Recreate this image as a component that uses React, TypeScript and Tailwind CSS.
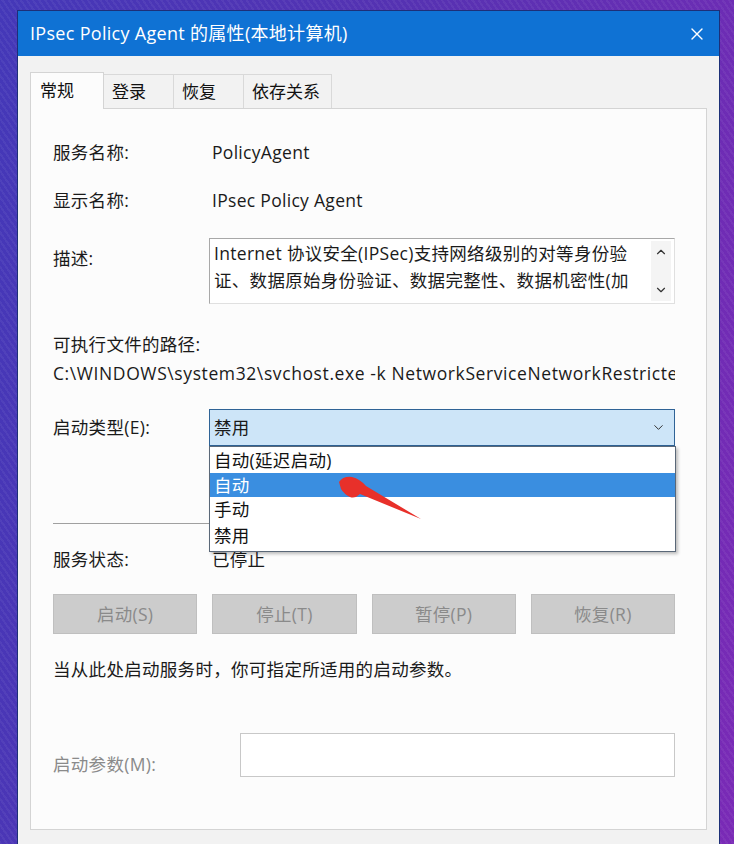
import { X, ChevronDown, ChevronUp } from "lucide-react"

const font = "font-['Open_Sans','Noto_Sans_CJK_SC',sans-serif]"

export default function App() {
  return (
    <div
      className={`relative w-[734px] h-[844px] overflow-hidden ${font} bg-[repeating-linear-gradient(55deg,rgba(255,255,255,0.05)_0_2px,transparent_2px_5px),linear-gradient(100deg,#4438b8_0%,#5532b2_45%,#6a2db4_80%,#7a2ab6_100%)] pl-[17px] pt-[10px]`}
    >
      <div className="w-[703px] h-[860px] border border-[#1d2f78] bg-[#f2f2f2] flex flex-col">
        {/* title bar */}
        <div className="h-[45px] bg-[#0f72d4] flex items-center pl-[12px] pr-[12px] text-white">
          <span className="text-[18px] tracking-[0.3px]">IPsec Policy Agent 的属性(本地计算机)</span>
          <X className="ml-auto w-[20px] h-[20px]" strokeWidth={1.6} />
        </div>

        <div className="px-[12px] pt-[15px] flex flex-col">
          {/* tabs */}
          <div className="flex items-end h-[37px] text-[17px] text-[#111]">
            <div className="h-[37px] w-[74px] border border-b-0 border-[#d4d4d4] bg-[#fcfcfc] flex items-center pl-[9px] relative top-[1px] z-10">常规</div>
            <Tab w="w-[70px]">登录</Tab>
            <Tab w="w-[70px]">恢复</Tab>
            <Tab w="w-[88px]">依存关系</Tab>
          </div>

          {/* panel */}
          <div className="h-[722px] w-[677px] border border-[#d4d4d4] bg-[#fcfcfc] pl-[22px] pr-[31px] pt-[31px] text-[17.5px] tracking-[0.3px] text-[#1a1a1a] flex flex-col relative">
            <Row label="服务名称:">PolicyAgent</Row>
            <div className="h-[24px]" />
            <Row label="显示名称:">IPsec Policy Agent</Row>

            <div className="flex mt-[26px]">
              <div className="w-[156px] pt-[8px] leading-[24px]">描述:</div>
              <div className="flex-1 h-[66px] border border-[#a8a8a8] border-r-[#e0e0e0] border-b-[#e0e0e0] bg-white flex">
                <div className="flex-1 pl-[4px] pt-[1px] leading-[27px] overflow-hidden whitespace-nowrap">
                  <div>Internet 协议安全(IPSec)支持网络级别的对等身份验</div>
                  <div>证、数据原始身份验证、数据完整性、数据机密性(加</div>
                </div>
                <div className="w-[20px] mr-[3px] my-[2px] bg-[#f4f4f4] flex flex-col items-center justify-between py-[4px] text-[#333]">
                  <ChevronUp className="w-[14px] h-[14px]" strokeWidth={2} />
                  <ChevronDown className="w-[14px] h-[14px]" strokeWidth={2} />
                </div>
              </div>
            </div>

            <div className="mt-[28px] h-[24px] leading-[24px]">可执行文件的路径:</div>
            <div className="mt-[5px] h-[24px] leading-[24px] whitespace-nowrap overflow-hidden tracking-[0.6px]">
              C:\WINDOWS\system32\svchost.exe -k NetworkServiceNetworkRestricted
            </div>

            <div className="flex items-center mt-[24px]">
              <div className="w-[156px]">启动类型(E):</div>
              <div className="flex-1 h-[37px] border border-[#2f6396] bg-[#cde5f8] flex items-center pl-[4px] pr-[8px]">
                <span>禁用</span>
                <ChevronDown className="ml-auto w-[15px] h-[15px] text-[#333]" strokeWidth={1.6} />
              </div>
            </div>

            <div className="mt-[77px] h-px bg-[#a0a0a0]" />

            <div className="mt-[23px]">
              <Row label="服务状态:">已停止</Row>
            </div>

            <div className="mt-[23px] grid grid-cols-4 gap-[15px]">
              {["启动(S)", "停止(T)", "暂停(P)", "恢复(R)"].map((b) => (
                <div key={b} className="h-[40px] bg-[#cccccc] border border-[#bfbfbf] flex items-center justify-center text-[#8a8a8a]">
                  {b}
                </div>
              ))}
            </div>

            <div className="mt-[23px] h-[24px] leading-[24px]">当从此处启动服务时，你可指定所适用的启动参数。</div>

            <div className="flex items-start mt-[52px]">
              <div className="w-[187px] pt-[19px] leading-[24px] text-[#8a8a8a]">启动参数(M):</div>
              <div className="flex-1 h-[44px] border border-[#c8c8c8] bg-white" />
            </div>

            {/* open combo list */}
            <div className="absolute left-[178px] top-[337px] w-[467px] h-[106px] bg-white border border-[#5a6878] shadow-[2px_2px_3px_rgba(0,0,0,0.25)] py-[1px] text-[#111] leading-[24px]">
              <div className="h-[25px] pl-[4px]">自动(延迟启动)</div>
              <div className="h-[24px] pl-[4px] bg-[#3a8ee0] text-white">自动</div>
              <div className="h-[26px] pl-[4px]">手动</div>
              <div className="h-[24px] pl-[4px]">禁用</div>
            </div>
          </div>
        </div>
      </div>

      {/* red pointer arrow */}
      <svg className="absolute left-0 top-0 pointer-events-none" width="734" height="844" viewBox="0 0 734 844">
        <path
          d="M339 482 Q343 476 352 477 Q360 479 366 486 L421 519 L360 494 Q355 499 350 497 Q344 494 341 489 Z"
          fill="#e8302a"
        />
      </svg>
    </div>
  )
}

function Tab({ w, children }: { w: string; children: React.ReactNode }) {
  return (
    <div className={`${w} h-[34px] border border-l-0 border-b-0 border-[#d9d9d9] bg-[#f2f2f2] flex items-center pl-[8px]`}>
      {children}
    </div>
  )
}

function Row({ label, children }: { label: string; children: React.ReactNode }) {
  return (
    <div className="flex h-[24px] leading-[24px] items-center">
      <div className="w-[159px]">{label}</div>
      <div>{children}</div>
    </div>
  )
}
